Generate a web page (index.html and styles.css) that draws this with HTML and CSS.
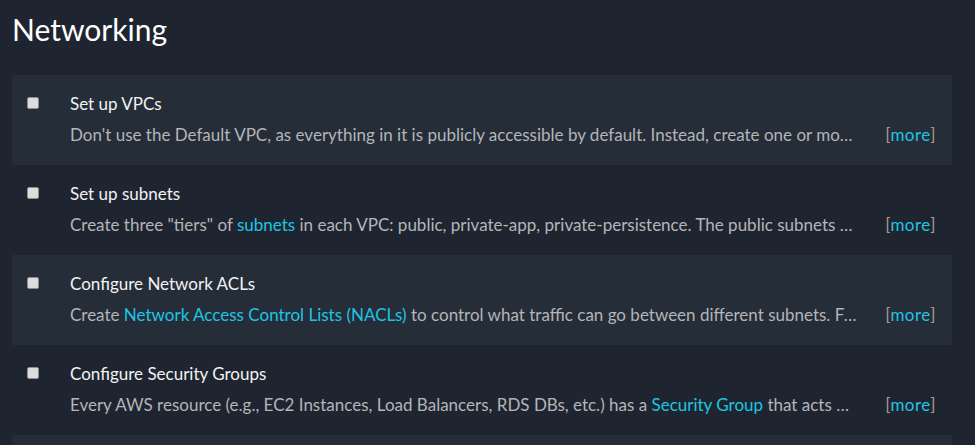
FILE: index.html
```html
<!DOCTYPE html>
<html>
<head>
<meta charset="utf-8">
<link rel="stylesheet" href="styles.css">
</head>
<body>
<div class="page">
  <h1 class="heading">Networking</h1>
  <ul class="list">
    <li class="item">
      <span class="check"></span>
      <div class="body">
        <div class="title">Set up VPCs</div>
        <div class="desc-row">
          <div class="desc">Don't use the Default VPC, as everything in it is publicly accessible by default. Instead, create one or more custom VPCs, each with their own IP address range.</div>
          <span class="more"><span class="br">[</span><a class="link">more</a><span class="br">]</span></span>
        </div>
      </div>
    </li>
    <li class="item">
      <span class="check"></span>
      <div class="body">
        <div class="title">Set up subnets</div>
        <div class="desc-row">
          <div class="desc">Create three "tiers" of <a class="link">subnets</a> in each VPC: public, private-app, private-persistence. The public subnets are directly accessible from the public Internet.</div>
          <span class="more"><span class="br">[</span><a class="link">more</a><span class="br">]</span></span>
        </div>
      </div>
    </li>
    <li class="item">
      <span class="check"></span>
      <div class="body">
        <div class="title">Configure Network ACLs</div>
        <div class="desc-row">
          <div class="desc">Create <a class="link">Network Access Control Lists (NACLs)</a> to control what traffic can go between different subnets. For example, the public subnets should allow traffic.</div>
          <span class="more"><span class="br">[</span><a class="link">more</a><span class="br">]</span></span>
        </div>
      </div>
    </li>
    <li class="item">
      <span class="check"></span>
      <div class="body">
        <div class="title">Configure Security Groups</div>
        <div class="desc-row">
          <div class="desc">Every AWS resource (e.g., EC2 Instances, Load Balancers, RDS DBs, etc.) has a <a class="link">Security Group</a> that acts as a firewall, controlling what traffic is allowed in and out.</div>
          <span class="more"><span class="br">[</span><a class="link">more</a><span class="br">]</span></span>
        </div>
      </div>
    </li>
    <li class="item">
      <span class="check"></span>
      <div class="body">
        <div class="title">Configure Static IPs</div>
        <div class="desc-row">
          <div class="desc">By default, all AWS resources have dynamic IP addresses.</div>
          <span class="more"><span class="br">[</span><a class="link">more</a><span class="br">]</span></span>
        </div>
      </div>
    </li>
  </ul>
</div>
</body>
</html>
```
FILE: styles.css
```css
html, body {
  margin: 0;
  padding: 0;
  background: #1f2530;
  font-family: "Lato", "Open Sans", sans-serif;
  overflow: hidden;
}
.page {
  padding: 0 23px 0 12px;
}
.heading {
  margin: 0;
  padding-top: 10px;
  height: 75px;
  box-sizing: border-box;
  font-size: 30px;
  line-height: 38px;
  font-weight: 400;
  color: #ffffff;
}
.list {
  list-style: none;
  margin: 0;
  padding: 0;
}
.item {
  display: flex;
  height: 90px;
  box-sizing: border-box;
  padding: 17px 16px 0 15px;
}
.item:nth-child(odd) {
  background: #252d39;
}
.check {
  flex: none;
  width: 10px;
  height: 10px;
  margin-top: 5px;
  margin-right: 31px;
  background: #dcdcdc;
  border: 1px solid #8e8e8e;
  border-radius: 2px;
}
.body {
  flex: 1;
  min-width: 0;
}
.title {
  font-size: 17px;
  line-height: 24px;
  color: #f2f2f2;
}
.desc-row {
  display: flex;
  margin-top: 7px;
  font-size: 17px;
  line-height: 24px;
}
.desc {
  flex: 1;
  min-width: 0;
  white-space: nowrap;
  overflow: hidden;
  text-overflow: ellipsis;
  color: #b3b5b8;
  margin-right: 28px;
}
.link {
  color: #1ec5e3;
  text-decoration: none;
}
.more {
  flex: none;
  letter-spacing: 0.5px;
}
.br {
  color: #a99b83;
}
```
